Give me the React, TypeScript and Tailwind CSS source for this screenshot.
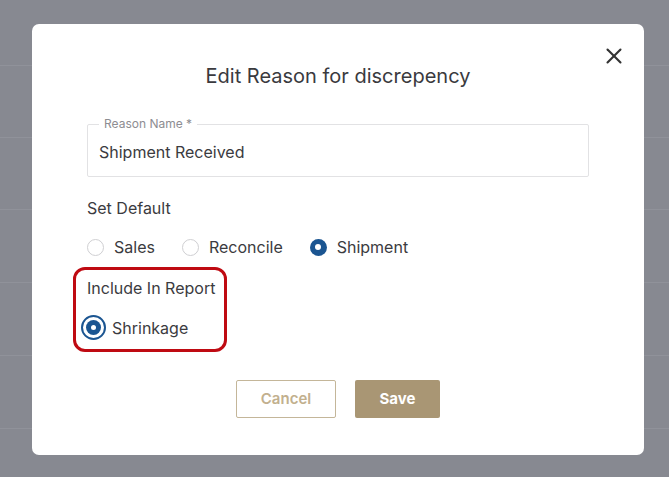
import { X } from "lucide-react";

const font = { fontFamily: "Inter, 'Noto Sans', sans-serif" };

function Radio({ checked, focused }: { checked?: boolean; focused?: boolean }) {
  if (focused) {
    return (
      <span className="flex h-[25px] w-[25px] items-center justify-center rounded-full border-2 border-[#1b5591] bg-white">
        <span className="flex h-[15px] w-[15px] items-center justify-center rounded-full bg-[#1b5591]">
          <span className="h-[5px] w-[5px] rounded-full bg-white" />
        </span>
      </span>
    );
  }
  if (checked) {
    return (
      <span className="flex h-[17px] w-[17px] items-center justify-center rounded-full bg-[#1b5591]">
        <span className="h-[6px] w-[6px] rounded-full bg-white" />
      </span>
    );
  }
  return <span className="h-[17px] w-[17px] rounded-full border border-[#cfcfd2] bg-white" />;
}

function Option({ label, checked }: { label: string; checked?: boolean }) {
  return (
    <label className="flex items-center gap-[10px]">
      <Radio checked={checked} />
      <span className="text-[16px] text-[#3b3b40]">{label}</span>
    </label>
  );
}

export default function App() {
  const rows = [66, 72, 72, 73, 73, 73];
  return (
    <div className="relative h-[477px] w-[669px] overflow-hidden bg-[#878991]" style={font}>
      {rows.map((h, i) => (
        <div key={i} className="border-b border-[#90929a]" style={{ height: h }} />
      ))}

      <div className="absolute left-[32px] top-[24px] flex h-[431px] w-[612px] flex-col rounded-[7px] bg-white px-[55px]">
        <button className="absolute right-[17px] top-[19px] text-[#333]">
          <X size={26} strokeWidth={1.9} />
        </button>

        <h2 className="mt-[40px] text-center text-[20px] leading-[24px] text-[#3a3a3e]">
          Edit Reason for discrepency
        </h2>

        <div className="relative mt-[36px] h-[53px] rounded-[2px] border border-[#e2e2e4]">
          <span className="absolute -top-[8px] left-[11px] bg-white px-[5px] text-[12px] leading-[14px] text-[#8d8d92]">
            Reason Name *
          </span>
          <div className="flex h-full items-center px-[11px] pt-[2px] text-[16px] text-[#3b3b40]">
            Shipment Received
          </div>
        </div>

        <div className="mt-[21px] text-[16px] leading-[20px] text-[#3b3b40]">Set Default</div>

        <div className="mt-[17px] flex items-center gap-[27px]">
          <Option label="Sales" />
          <Option label="Reconcile" />
          <Option label="Shipment" checked />
        </div>

        <div className="-ml-[14px] mt-[8px] w-[154px] rounded-[12px] border-[3px] border-[#bf0a12] pb-[9px] pl-[11px] pt-[8px]">
          <div className="text-[16px] leading-[20px] text-[#3b3b40]">Include In Report</div>
          <label className="-ml-[6px] mt-[17px] flex items-center gap-[6px]">
            <Radio focused />
            <span className="text-[16px] text-[#3b3b40]">Shrinkage</span>
          </label>
        </div>

        <div className="mt-[28px] flex justify-center gap-[19px]">
          <button className="h-[38px] w-[100px] rounded-[2px] border-[1.5px] border-[#c4b699] text-[15px] font-semibold text-[#c2b08e]">
            Cancel
          </button>
          <button className="h-[38px] w-[85px] rounded-[2px] bg-[#a99674] text-[15px] font-bold text-white">
            Save
          </button>
        </div>
      </div>
    </div>
  );
}
